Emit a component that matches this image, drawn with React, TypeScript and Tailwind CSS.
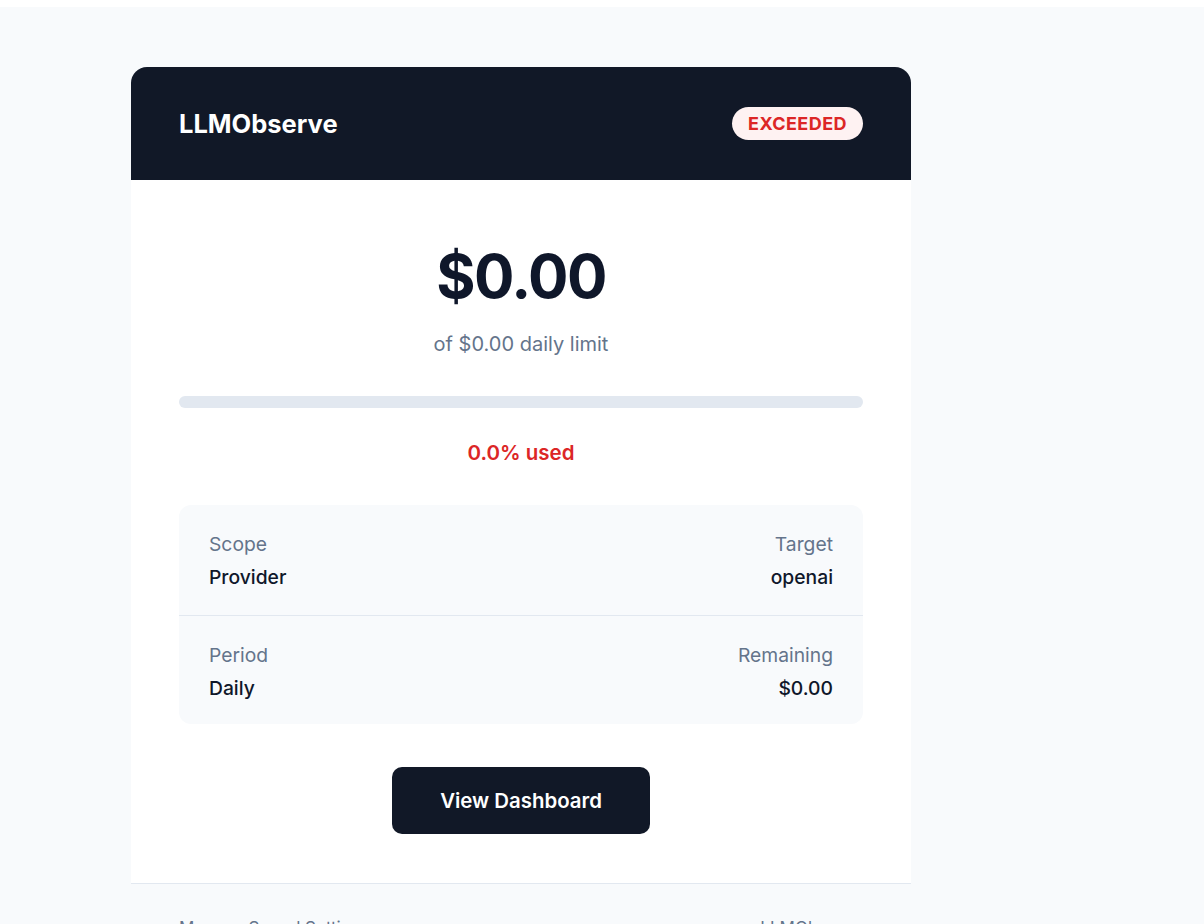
import React from "react";

export default function App() {
  return (
    <div className="min-h-[924px] bg-[#f8fafc]" style={{ fontFamily: "Inter, 'Noto Sans', sans-serif" }}>
      <div className="h-[7px] bg-white" />
      <div className="pt-[60px] pl-[131px]">
        <div className="w-[780px] rounded-t-2xl overflow-hidden">
          <div className="h-[113px] bg-[#111827] px-12 flex items-center justify-between">
            <div className="text-white text-[25.5px] leading-8 font-bold">LLMObserve</div>
            <div className="rounded-full bg-[#fef2f2] text-[#dc2626] text-[18px] leading-[25px] font-bold tracking-wide px-4 py-1">
              EXCEEDED
            </div>
          </div>
          <div className="bg-white px-12 pt-[66px] pb-[49px] flex flex-col items-center">
            <div className="text-6xl leading-none font-bold tracking-tight text-[#0f172a]">$0.00</div>
            <div className="mt-6 text-[20px] leading-7 text-[#64748b]">of $0.00 daily limit</div>
            <div className="mt-[38px] h-3 w-full rounded-full bg-[#e2e8f0]" />
            <div className="mt-[31px] text-[20.5px] leading-7 font-semibold text-[#dc2626]">0.0% used</div>
            <div className="mt-[38px] w-full rounded-xl bg-[#f8fafc]">
              <div className="px-[30px] pt-[25px] pb-6 flex justify-between border-b border-[#e2e8f0]">
                <div>
                  <div className="text-[19.3px] leading-7 text-[#64748b]">Scope</div>
                  <div className="mt-[5px] text-[19.3px] leading-7 font-medium text-[#0f172a]">Provider</div>
                </div>
                <div className="text-right">
                  <div className="text-[19.3px] leading-7 text-[#64748b]">Target</div>
                  <div className="mt-[5px] text-[19.3px] leading-7 font-medium text-[#0f172a]">openai</div>
                </div>
              </div>
              <div className="px-[30px] pt-[25px] pb-[22px] flex justify-between">
                <div>
                  <div className="text-[19.3px] leading-7 text-[#64748b]">Period</div>
                  <div className="mt-[5px] text-[19.3px] leading-7 font-medium text-[#0f172a]">Daily</div>
                </div>
                <div className="text-right">
                  <div className="text-[19.3px] leading-7 text-[#64748b]">Remaining</div>
                  <div className="mt-[5px] text-[19.3px] leading-7 font-medium text-[#0f172a]">$0.00</div>
                </div>
              </div>
            </div>
            <button className="mt-[43px] h-[67px] w-[258px] rounded-[10px] bg-[#111827] text-white text-[20.4px] font-semibold flex items-center justify-center pt-px">
              View Dashboard
            </button>
          </div>
          <div className="border-t border-[#e2e8f0] bg-[#f8fafc] px-12 pt-[32px] pb-8 flex justify-between text-[17px] leading-6 text-[#64748b]">
            <span>Manage Spend Settings</span>
            <span>LLMObserve</span>
          </div>
        </div>
      </div>
    </div>
  );
}
